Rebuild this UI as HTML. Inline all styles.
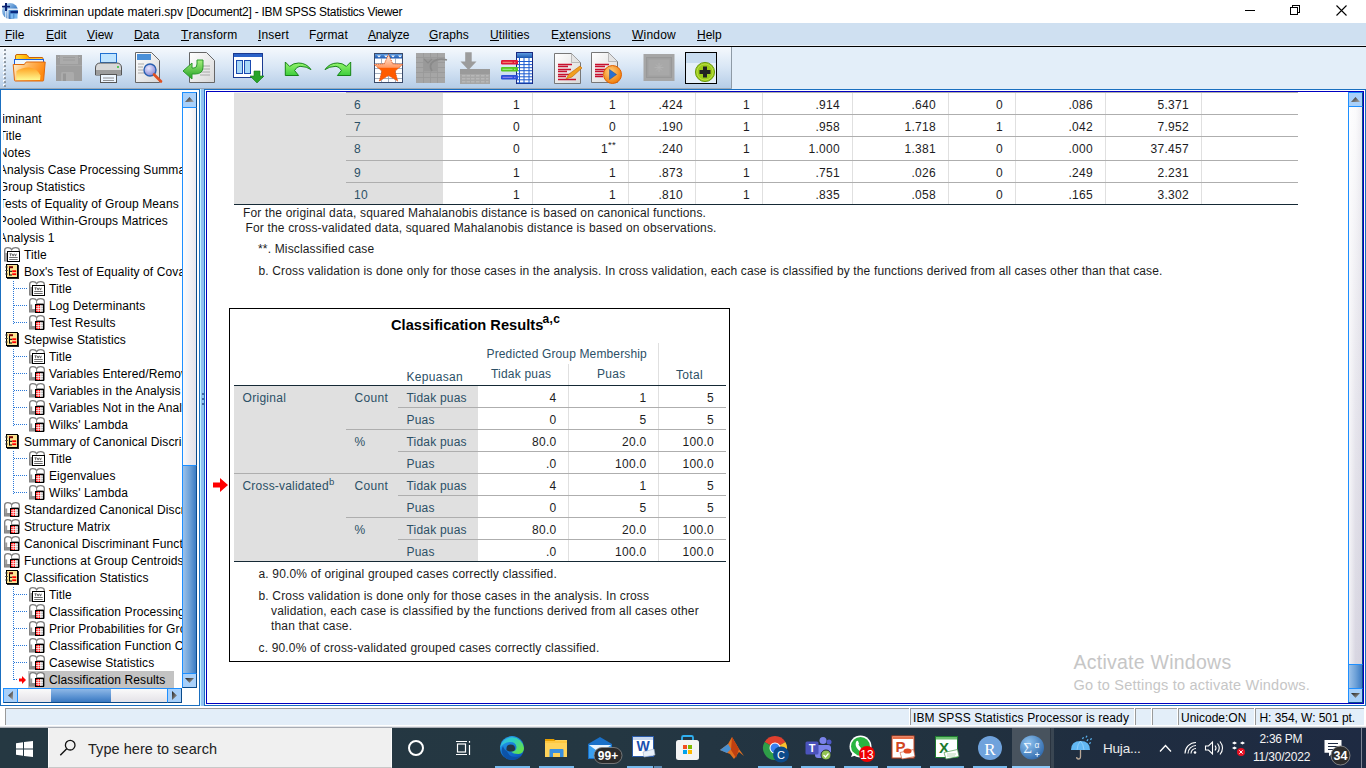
<!DOCTYPE html>
<html><head><meta charset="utf-8">
<style>
*{box-sizing:border-box}
html,body{margin:0;padding:0}
body{width:1366px;height:768px;overflow:hidden;position:relative;background:#fff;font-family:"Liberation Sans",sans-serif;font-size:12px;color:#000}
.a{position:absolute;white-space:nowrap;line-height:16px}
.b{position:absolute}
svg.b{overflow:visible}
u{text-decoration:none;position:relative}
u:after{content:"";position:absolute;left:0;right:0;bottom:0.6px;height:1px;background:#000}
sup{font-size:9.5px;line-height:0;vertical-align:0;position:relative;top:-5px}
</style></head><body>
<svg width="0" height="0" style="position:absolute">
<defs>
<linearGradient id="gtri" x1="0" y1="0" x2="1" y2="1"><stop offset="0" stop-color="#222"/><stop offset="1" stop-color="#aaa"/></linearGradient>
<symbol id="ic-title" viewBox="0 0 16 15">
  <path d="M0.7 13.8V3Q0.7 0.7 3.8 0.7Q6.8 0.7 7.6 2.6Q8.6 0.7 11.6 0.7Q15 0.7 15.3 3V13.8Z" fill="#fff" stroke="#7c7c7c" stroke-width="1.3"/>
  <path d="M1.2 6h2v7.5h-2z" fill="#9a9a9a"/>
  <rect x="3.5" y="4.5" width="12" height="10" fill="#fff" stroke="#000"/>
  <path d="M5.5 6.8h2.2M6.6 6.8v2.4M8.2 6.8l0.9 2.3l0.9-2.3M10.6 6.8l0.9 2.3l0.9-2.3M5.2 10.5h8.5M5.2 12.5h8.5" stroke="#4a4a4a" stroke-width="0.8" fill="none"/>
</symbol>
<symbol id="ic-table" viewBox="0 0 16 15">
  <path d="M0.7 13.8V3Q0.7 0.7 3.8 0.7Q6.8 0.7 7.6 2.6Q8.6 0.7 11.6 0.7Q15 0.7 15.3 3V13.8Z" fill="#fff" stroke="#7c7c7c" stroke-width="1.3"/>
  <path d="M1.2 6.5h2v7h-2z" fill="#9a9a9a"/>
  <path d="M1.2 11h5.5v3h-5.5z" fill="#8e8e8e"/>
  <path d="M7.6 2.6V13.8" stroke="#8a8a8a" stroke-width="1"/>
  <path d="M8 5h7v9h-7z" fill="#9c9c9c"/>
  <rect x="6.5" y="6.5" width="8" height="8" fill="#fff" stroke="#000"/>
  <rect x="7" y="7" width="4.5" height="7" fill="#f00"/>
  <rect x="11.5" y="7" width="2.5" height="7" fill="#a8a8a8"/>
  <path d="M7 8.75h7M7 10.5h7M7 12.25h7M9.2 7v7M11.8 7v7" stroke="#fff" stroke-width="0.75"/>
</symbol>
<symbol id="ic-book" viewBox="0 0 15 15">
  <rect x="2" y="1" width="12" height="14" fill="#2a2a2a"/>
  <rect x="1.5" y="0.5" width="11" height="13" fill="#fde493" stroke="#000"/>
  <path d="M0.2 3h2.6M0.2 6.5h2.6M0.2 10h2.6" stroke="#444" stroke-width="1.1"/>
  <rect x="4" y="2.2" width="4" height="2" fill="#7a0000"/>
  <path d="M4.5 4v7.5M4.5 7.3h2.5M4.5 11h2.5" stroke="#000" stroke-width="1"/>
  <rect x="7.2" y="6.3" width="4" height="1.8" fill="#f00"/>
  <rect x="7.2" y="9.3" width="4" height="1.8" fill="#f00"/>
</symbol>
</defs></svg>

<div class="b" style="left:0px;top:0px;width:1366px;height:23px;background:#fff"></div>
<svg class="b" style="left:0;top:0" width="20" height="22" viewBox="0 0 20 22">
<defs><linearGradient id="gic" x1="0" y1="0" x2="1" y2="1"><stop offset="0" stop-color="#cfe8fc"/><stop offset="0.55" stop-color="#4a88cc"/><stop offset="1" stop-color="#1a4a98"/></linearGradient></defs>
<circle cx="10" cy="11" r="8" fill="url(#gic)"/>
<rect x="5.3" y="11" width="1" height="7.5" fill="#fff"/>
<rect x="7.4" y="9.5" width="1" height="9.5" fill="#fff"/>
<rect x="8" y="8.6" width="10" height="1.2" fill="#fff"/>
<rect x="10.5" y="11" width="7.5" height="2.2" fill="#0a2a80"/>
<rect x="10.5" y="13.6" width="7" height="5" fill="#7ab8f0"/>
<path d="M13.8 13.6v5" stroke="#3a78c0" stroke-width="0.8"/>
<rect x="5" y="3" width="2" height="8" fill="#0a2070"/>
<rect x="2" y="5.8" width="8" height="1.6" fill="#0a2070"/>
</svg>
<div class="a" style="left:23.5px;top:3.84px;font-size:12px;line-height:16px;letter-spacing:0px">diskriminan update materi.spv</div>
<div class="a" style="left:186.5px;top:3.84px;font-size:12px;line-height:16px;letter-spacing:-0.27px">[Document2] - IBM SPSS Statistics Viewer</div>
<div class="b" style="left:1245px;top:10px;width:10px;height:1px;background:#000"></div>
<div class="b" style="left:1292px;top:5px;width:8px;height:8px;border:1px solid #000"></div>
<div class="b" style="left:1290px;top:7px;width:8px;height:8px;border:1px solid #000;background:#fff"></div>
<svg class="b" style="left:1336px;top:5px" width="11" height="11" viewBox="0 0 11 11"><path d="M0.5 0.5L10.5 10.5M10.5 0.5L0.5 10.5" stroke="#000" stroke-width="1.1"/></svg>
<div class="b" style="left:0px;top:23px;width:1366px;height:23px;background:#cfe0f1"></div>
<div class="a" style="left:5px;top:26.84px;font-size:12px;line-height:16px;letter-spacing:0px"><u>F</u>ile</div>
<div class="a" style="left:46px;top:26.84px;font-size:12px;line-height:16px;letter-spacing:0px"><u>E</u>dit</div>
<div class="a" style="left:87px;top:26.84px;font-size:12px;line-height:16px;letter-spacing:0px"><u>V</u>iew</div>
<div class="a" style="left:134px;top:26.84px;font-size:12px;line-height:16px;letter-spacing:0px"><u>D</u>ata</div>
<div class="a" style="left:181px;top:26.84px;font-size:12px;line-height:16px;letter-spacing:0.2px"><u>T</u>ransform</div>
<div class="a" style="left:258px;top:26.84px;font-size:12px;line-height:16px;letter-spacing:0.15px"><u>I</u>nsert</div>
<div class="a" style="left:309px;top:26.84px;font-size:12px;line-height:16px;letter-spacing:0.15px">F<u>o</u>rmat</div>
<div class="a" style="left:368px;top:26.84px;font-size:12px;line-height:16px;letter-spacing:-0.2px"><u>A</u>nalyze</div>
<div class="a" style="left:429px;top:26.84px;font-size:12px;line-height:16px;letter-spacing:0.1px"><u>G</u>raphs</div>
<div class="a" style="left:490px;top:26.84px;font-size:12px;line-height:16px;letter-spacing:0.1px"><u>U</u>tilities</div>
<div class="a" style="left:551px;top:26.84px;font-size:12px;line-height:16px;letter-spacing:0.12px">E<u>x</u>tensions</div>
<div class="a" style="left:632px;top:26.84px;font-size:12px;line-height:16px;letter-spacing:0.2px"><u>W</u>indow</div>
<div class="a" style="left:697px;top:26.84px;font-size:12px;line-height:16px;letter-spacing:0px"><u>H</u>elp</div>
<div class="b" style="left:0px;top:45px;width:1366px;height:1px;background:#e8f0f8"></div>
<div class="b" style="left:0px;top:46px;width:1366px;height:1px;background:#000"></div>
<div class="b" style="left:0px;top:47px;width:1366px;height:42px;background:#e3eef9"></div>
<div class="b" style="left:0px;top:47px;width:732px;height:41px;background:linear-gradient(#f5f9fd 0%,#d8e6f5 50%,#b6cde7 100%);border-right:1px solid #8e9aa6"></div>
<div class="b" style="left:0px;top:88px;width:732px;height:1px;background:#9aa8b6"></div>
<div class="b" style="left:3px;top:48px;width:2px;height:2px;background:rgba(255,255,255,0.9)"></div>
<div class="b" style="left:4px;top:48.5px;width:2px;height:2px;background:#8a949e;border-radius:0.5px"></div>
<div class="b" style="left:3px;top:52px;width:2px;height:2px;background:rgba(255,255,255,0.9)"></div>
<div class="b" style="left:4px;top:52.5px;width:2px;height:2px;background:#8a949e;border-radius:0.5px"></div>
<div class="b" style="left:3px;top:56px;width:2px;height:2px;background:rgba(255,255,255,0.9)"></div>
<div class="b" style="left:4px;top:56.5px;width:2px;height:2px;background:#8a949e;border-radius:0.5px"></div>
<div class="b" style="left:3px;top:60px;width:2px;height:2px;background:rgba(255,255,255,0.9)"></div>
<div class="b" style="left:4px;top:60.5px;width:2px;height:2px;background:#8a949e;border-radius:0.5px"></div>
<div class="b" style="left:3px;top:64px;width:2px;height:2px;background:rgba(255,255,255,0.9)"></div>
<div class="b" style="left:4px;top:64.5px;width:2px;height:2px;background:#8a949e;border-radius:0.5px"></div>
<div class="b" style="left:3px;top:68px;width:2px;height:2px;background:rgba(255,255,255,0.9)"></div>
<div class="b" style="left:4px;top:68.5px;width:2px;height:2px;background:#8a949e;border-radius:0.5px"></div>
<div class="b" style="left:3px;top:72px;width:2px;height:2px;background:rgba(255,255,255,0.9)"></div>
<div class="b" style="left:4px;top:72.5px;width:2px;height:2px;background:#8a949e;border-radius:0.5px"></div>
<div class="b" style="left:3px;top:76px;width:2px;height:2px;background:rgba(255,255,255,0.9)"></div>
<div class="b" style="left:4px;top:76.5px;width:2px;height:2px;background:#8a949e;border-radius:0.5px"></div>
<div class="b" style="left:3px;top:80px;width:2px;height:2px;background:rgba(255,255,255,0.9)"></div>
<div class="b" style="left:4px;top:80.5px;width:2px;height:2px;background:#8a949e;border-radius:0.5px"></div>
<div class="b" style="left:3px;top:84px;width:2px;height:2px;background:rgba(255,255,255,0.9)"></div>
<div class="b" style="left:4px;top:84.5px;width:2px;height:2px;background:#8a949e;border-radius:0.5px"></div>
<svg class="b" style="left:0;top:47px" width="732" height="41" viewBox="0 47 732 41">
<defs>
<linearGradient id="gfold" x1="0" y1="0" x2="0" y2="1"><stop offset="0" stop-color="#ffe070"/><stop offset="0.5" stop-color="#ffb030"/><stop offset="1" stop-color="#ffd860"/></linearGradient>
<linearGradient id="ggreen" x1="0" y1="0" x2="0" y2="1"><stop offset="0" stop-color="#a8f080"/><stop offset="1" stop-color="#20a020"/></linearGradient>
<linearGradient id="gdoc" x1="0" y1="0" x2="1" y2="1"><stop offset="0" stop-color="#fff"/><stop offset="1" stop-color="#d8d8d8"/></linearGradient>
<linearGradient id="gblue" x1="0" y1="0" x2="0" y2="1"><stop offset="0" stop-color="#5d9be0"/><stop offset="1" stop-color="#1a56b0"/></linearGradient>
<linearGradient id="ggreen2" x1="0" y1="0" x2="0" y2="1"><stop offset="0" stop-color="#9af870"/><stop offset="1" stop-color="#3ccc3c"/></linearGradient>
<linearGradient id="gtab" x1="0" y1="0" x2="1" y2="0"><stop offset="0" stop-color="#ffe040"/><stop offset="0.4" stop-color="#ffb000"/><stop offset="1" stop-color="#ffd040"/></linearGradient>
<linearGradient id="gfold2" x1="0" y1="0" x2="1" y2="0.3"><stop offset="0" stop-color="#fff4d8"/><stop offset="0.5" stop-color="#ffb860"/><stop offset="1" stop-color="#ff8a10"/></linearGradient>
<linearGradient id="gfoldlo" x1="0" y1="0" x2="0" y2="1"><stop offset="0" stop-color="#ffa020"/><stop offset="1" stop-color="#fff890"/></linearGradient>
<linearGradient id="gstar" x1="0" y1="0" x2="0" y2="1"><stop offset="0" stop-color="#fff0e4"/><stop offset="0.48" stop-color="#ff9a66"/><stop offset="0.52" stop-color="#ff5c00"/><stop offset="1" stop-color="#ff5a00"/></linearGradient>
<radialGradient id="gorange" cx="0.4" cy="0.35" r="0.7"><stop offset="0" stop-color="#ffd080"/><stop offset="1" stop-color="#f07800"/></radialGradient>
<radialGradient id="gmag" cx="0.4" cy="0.35" r="0.7"><stop offset="0" stop-color="#e8e8ff"/><stop offset="1" stop-color="#8080d0"/></radialGradient>
</defs>
<!-- 1 open folder -->
<path d="M15.5 59V56q0-1.5 1.5-1.5h9q1 0 1.8 1.2l1 1.8h13.2q1 0 1 1V60H15.5z" fill="url(#gtab)" stroke="#c8600a"/>
<rect x="14.5" y="59.5" width="29" height="5" fill="#eef8ff" stroke="#1a60e0"/>
<path d="M13.2 64.5h11l2-2.5h19l-1.6 18.3q0 0.7-0.7 0.7h-27.6q-0.7 0-0.8-0.7z" fill="url(#gfold2)" stroke="#e0680a"/>
<path d="M16.5 80q-0.5-6 0-9q6-4 13-3.5q8 1 11 8l-0.5 4.5z" fill="url(#gfoldlo)"/>
<!-- 2 floppy (disabled) -->
<rect x="56" y="55" width="26" height="26" fill="#9e9e9e"/>
<rect x="60" y="55" width="18" height="9" fill="#ababab"/>
<path d="M63 57.5h12M63 60h12" stroke="#999" stroke-width="0.8"/>
<path d="M56 65.5h26" stroke="#aaa" stroke-width="0.8"/>
<path d="M61 81v-7.5q0-1.5 1.5-1.5h10q1.5 0 1.5 1.5V81z" fill="#ababab"/>
<rect x="63" y="73.5" width="3" height="7.5" fill="#979797"/>
<circle cx="58.5" cy="57.5" r="0.6" fill="#bbb"/><circle cx="79.5" cy="57.5" r="0.6" fill="#bbb"/>
<!-- 3 printer -->
<rect x="100.5" y="53.5" width="16" height="9" fill="#bfe4ff" stroke="#2070d0"/>
<path d="M95.5 68q0-5 5-5h16q5 0 5 5v7h-26z" fill="#d8d8d8" stroke="#555"/>
<rect x="96" y="70" width="25" height="5" fill="#9c9c9c"/>
<circle cx="118" cy="67" r="1" fill="#30c030"/>
<rect x="100.5" y="74.5" width="16" height="8" fill="#eef6ff" stroke="#555"/>
<path d="M103 78h11M103 80.5h11" stroke="#777" stroke-width="0.8"/>
<!-- 4 print preview -->
<path d="M135.5 52.5h16l8 8v22h-24z" fill="url(#gdoc)" stroke="#666"/>
<rect x="137" y="54" width="14" height="6" fill="#4a90d8"/>
<path d="M138 64h6M138 67h5M138 70h5M138 73h6" stroke="#999" stroke-width="0.8"/>
<circle cx="150" cy="70" r="6" fill="url(#gmag)" stroke="#2a60b0" stroke-width="1.4"/>
<path d="M154 74.5l7 7" stroke="#e05020" stroke-width="2.6" stroke-linecap="round"/>
<!-- 5 export doc w green arrow -->
<path d="M189.5 52.5h17l8 8v22h-25z" fill="url(#gdoc)" stroke="#666"/>
<path d="M200 66h10M200 69h10M200 72h10M200 75h10" stroke="#999" stroke-width="0.8"/>
<path d="M203 60v7q0 7-8 7h-3v5l-9-8l9-8v5h2q3 0 3-4v-4z" fill="url(#ggreen)" stroke="#2a9a2a"/>
<!-- 6 window w green arrow -->
<rect x="233.5" y="53.5" width="29" height="24" fill="#fff" stroke="#1a3a90"/>
<rect x="234" y="54" width="28" height="3" fill="#2a62c8"/>
<rect x="236.5" y="60.5" width="6" height="13" fill="#a8d8f8" stroke="#1a4ab0"/>
<rect x="244.5" y="60.5" width="6" height="13" fill="#a8d8f8" stroke="#1a4ab0"/>
<path d="M254 71h6v5h4l-7 7l-7-7h4z" fill="#28a428" stroke="#1a7a1a" stroke-width="0.6"/>
<!-- 7 undo -->
<path d="M285.3 62 L289.6 66.4 Q293.5 63 298.5 63 Q306.5 63 311 69.6 Q307 66.5 300 66.3 Q296.5 66.6 294.6 70.5 L298.6 75.5 L285.3 75.5 Z" fill="url(#ggreen2)" stroke="#0a7a0a" stroke-width="0.9" stroke-linejoin="round"/>
<!-- 8 redo -->
<path d="M 350.7 62 L 346.4 66.4 Q 342.5 63 337.5 63 Q 329.5 63 325 69.6 Q 329 66.5 336 66.3 Q 339.5 66.6 341.4 70.5 L 337.4 75.5 L 350.7 75.5 Z" fill="url(#ggreen2)" stroke="#0a7a0a" stroke-width="0.9" stroke-linejoin="round"/>
<!-- 9 grid with star -->
<rect x="374.5" y="53.5" width="28" height="29" fill="#fff" stroke="#3a4a6a"/>
<rect x="375" y="54" width="27" height="4.5" fill="url(#gblue)"/>
<path d="M377 55.5l2 2l2-2M384 55.5l2 2l2-2M391 55.5l2 2l2-2M398 55.5l2 2l2-2" fill="#fff"/>
<path d="M375 63.5h27M375 68.5h27M375 73.5h27M375 78.5h27M381.5 58v24M388.5 58v24M395.5 58v24" stroke="#8c9ab0" stroke-width="0.8"/>
<path d="M388.5 54.5l4.2 9.3l10 0.7l-7.6 6.6l2.6 10l-9.2-5.6l-9.2 5.6l2.6-10l-7.6-6.6l10-0.7z" fill="url(#gstar)" stroke="#e05010" stroke-width="0.9" stroke-dasharray="1.2 0.8"/>
<!-- 10 gray grid (disabled) -->
<rect x="416" y="53" width="29" height="30" fill="#a6a6a6"/>
<path d="M416 57.5h29M416 62.5h29M416 67.5h29M416 72.5h29M416 77.5h29M423.5 53v30M430.5 53v30M437.5 53v30" stroke="#989898" stroke-width="0.8"/>
<rect x="423.5" y="58.5" width="14" height="13" fill="#999"/>
<path d="M424 59l4 4l4-4" fill="none" stroke="#8a8a8a" stroke-width="1.2"/>
<path d="M432 71q-4-6 2-10q5-3 13-1" fill="none" stroke="#8a8a8a" stroke-width="1.8"/>
<!-- 11 gray download -->
<path d="M465.2 52.2h6.5v9.3h4.8l-8 8.5l-8-8.5h4.7z" fill="#9c9c9c"/>
<rect x="460" y="69" width="30" height="15" fill="#a6a6a6"/>
<rect x="460" y="69" width="30" height="5" fill="#9a9a9a"/>
<path d="M462 75.8h3.5M466.5 75.8h3.5M471 75.8h3.5M476 75.8h3.5M481 75.8h3.5M486 75.8h2.5M462 78.8h3.5M466.5 78.8h3.5M471 78.8h3.5M476 78.8h3.5M481 78.8h3.5M486 78.8h2.5M462 81.8h3.5M466.5 81.8h3.5M471 81.8h3.5M476 81.8h3.5M481 81.8h3.5M486 81.8h2.5" stroke="#b8b8b8" stroke-width="1.6"/>
<!-- 12 blue grid w bars -->
<rect x="516.5" y="52.5" width="16" height="31" fill="#fff" stroke="#1a2a80"/>
<rect x="517" y="53" width="15" height="5" fill="url(#gblue)"/>
<path d="M517 61.5h15M517 64.6h15M517 67.7h15M517 70.7h15M517 73.8h15M517 76.8h15M517 79.8h15M517 82.9h15M519.5 58v25M524 58v25M529 58v25" stroke="#1a5ad0" stroke-width="1"/>
<rect x="501" y="60" width="17" height="4.5" rx="1.2" fill="#e01838"/>
<path d="M502.5 62.3h10M514 62.3h1.5" stroke="#f8a080" stroke-width="0.9"/>
<rect x="501" y="67" width="17" height="4.5" rx="1.2" fill="#58c820"/>
<path d="M502.5 69.3h10M514 69.3h1.5" stroke="#a8f0a0" stroke-width="0.9"/>
<rect x="501" y="75" width="17" height="4.5" rx="1.2" fill="#2a50d8"/>
<path d="M502.5 77.3h10M514 77.3h1.5" stroke="#a890f0" stroke-width="0.9"/>
<!-- 13 doc w pencil -->
<path d="M554.5 53.5h17l9 9v21h-26z" fill="url(#gdoc)" stroke="#777"/>
<path d="M571.5 53.5v9h9z" fill="#e4e4e4" stroke="#999" stroke-width="0.6"/>
<path d="M558 64.5h14M558 66.5h10M558 69.5h13M558 71.5h9M558 74.5h12M558 76.5h8M558 79.5h18" stroke="#c8102e" stroke-width="1.3"/>
<path d="M566 79l3-5l11-8l2 2l-10 9z" fill="#f0a020" stroke="#c06000" stroke-width="0.6"/>
<!-- 14 doc w play -->
<path d="M591.5 52.5h17l9 9v21h-26z" fill="url(#gdoc)" stroke="#777"/>
<path d="M608.5 52.5v9h9z" fill="#e4e4e4" stroke="#999" stroke-width="0.6"/>
<path d="M595 64.5h14M595 66.5h10M595 69.5h13M595 71.5h9M595 74.5h8M595 76.5h8" stroke="#c8102e" stroke-width="1.3"/>
<circle cx="612.5" cy="74.5" r="9" fill="url(#gorange)" stroke="#e06000"/>
<path d="M609.5 69.5v10l7-5z" fill="#2a70d0" stroke="#1a4a90" stroke-width="0.5"/>
<!-- 15 gray screen -->
<rect x="643.5" y="54" width="31" height="27" fill="#a6a6a6"/>
<rect x="646.5" y="57.5" width="25" height="20" fill="#a0a0a0" stroke="#989898"/>
<rect x="648.5" y="59.5" width="21" height="16" fill="#a8a8a8"/>
<path d="M659 63v9M654.5 67.5h9M656 64.5l6 6M662 64.5l-6 6" stroke="#b4b4b4" stroke-width="0.8"/>
<!-- 16 add button -->
<rect x="685.5" y="52.5" width="31" height="31" fill="#e6f0fa" stroke="#000"/>
<rect x="686" y="53" width="30" height="10" fill="#c8dcf0"/>
<circle cx="705" cy="72" r="9.6" fill="#9ccc1a" stroke="#6a9a10"/>
<circle cx="705" cy="72" r="8" fill="none" stroke="#c0e050" stroke-width="0.8"/>
<path d="M703 66.5h4v11h-4zM699.5 70h11v4h-11z" fill="#222"/>
</svg>
<div class="b" style="left:0px;top:89px;width:1366px;height:617px;background:#e3eef9"></div>
<div class="b" style="left:0px;top:89px;width:200px;height:617px;background:#fff;border:1px solid #1a6fc0"></div>
<div class="b" style="left:3px;top:90px;width:179px;height:598px;overflow:hidden"><div class="b" style="left:-3px;top:-90px;width:1366px;height:768px">
<div class="b" style="left:28px;top:671px;width:146px;height:17px;background:#c3c3c3"></div>
<div class="b" style="left:14px;top:288px;width:14px;height:1px;background:repeating-linear-gradient(90deg,#2a78d8 0 1px,transparent 1px 2px)"></div>
<div class="b" style="left:14px;top:305px;width:14px;height:1px;background:repeating-linear-gradient(90deg,#2a78d8 0 1px,transparent 1px 2px)"></div>
<div class="b" style="left:14px;top:322px;width:14px;height:1px;background:repeating-linear-gradient(90deg,#2a78d8 0 1px,transparent 1px 2px)"></div>
<div class="b" style="left:14px;top:356px;width:14px;height:1px;background:repeating-linear-gradient(90deg,#2a78d8 0 1px,transparent 1px 2px)"></div>
<div class="b" style="left:14px;top:373px;width:14px;height:1px;background:repeating-linear-gradient(90deg,#2a78d8 0 1px,transparent 1px 2px)"></div>
<div class="b" style="left:14px;top:390px;width:14px;height:1px;background:repeating-linear-gradient(90deg,#2a78d8 0 1px,transparent 1px 2px)"></div>
<div class="b" style="left:14px;top:407px;width:14px;height:1px;background:repeating-linear-gradient(90deg,#2a78d8 0 1px,transparent 1px 2px)"></div>
<div class="b" style="left:14px;top:424px;width:14px;height:1px;background:repeating-linear-gradient(90deg,#2a78d8 0 1px,transparent 1px 2px)"></div>
<div class="b" style="left:14px;top:458px;width:14px;height:1px;background:repeating-linear-gradient(90deg,#2a78d8 0 1px,transparent 1px 2px)"></div>
<div class="b" style="left:14px;top:475px;width:14px;height:1px;background:repeating-linear-gradient(90deg,#2a78d8 0 1px,transparent 1px 2px)"></div>
<div class="b" style="left:14px;top:492px;width:14px;height:1px;background:repeating-linear-gradient(90deg,#2a78d8 0 1px,transparent 1px 2px)"></div>
<div class="b" style="left:14px;top:594px;width:14px;height:1px;background:repeating-linear-gradient(90deg,#2a78d8 0 1px,transparent 1px 2px)"></div>
<div class="b" style="left:14px;top:611px;width:14px;height:1px;background:repeating-linear-gradient(90deg,#2a78d8 0 1px,transparent 1px 2px)"></div>
<div class="b" style="left:14px;top:628px;width:14px;height:1px;background:repeating-linear-gradient(90deg,#2a78d8 0 1px,transparent 1px 2px)"></div>
<div class="b" style="left:14px;top:645px;width:14px;height:1px;background:repeating-linear-gradient(90deg,#2a78d8 0 1px,transparent 1px 2px)"></div>
<div class="b" style="left:14px;top:662px;width:14px;height:1px;background:repeating-linear-gradient(90deg,#2a78d8 0 1px,transparent 1px 2px)"></div>
<div class="b" style="left:14px;top:679px;width:14px;height:1px;background:repeating-linear-gradient(90deg,#2a78d8 0 1px,transparent 1px 2px)"></div>
<div class="b" style="left:13px;top:281px;width:1px;height:43px;background:repeating-linear-gradient(#2a78d8 0 1px,transparent 1px 2px)"></div>
<div class="b" style="left:13px;top:349px;width:1px;height:77px;background:repeating-linear-gradient(#2a78d8 0 1px,transparent 1px 2px)"></div>
<div class="b" style="left:13px;top:451px;width:1px;height:43px;background:repeating-linear-gradient(#2a78d8 0 1px,transparent 1px 2px)"></div>
<div class="b" style="left:13px;top:587px;width:1px;height:94px;background:repeating-linear-gradient(#2a78d8 0 1px,transparent 1px 2px)"></div>
<svg class="b" style="left:-44.5px;top:111px" width="15" height="15"><use href="#ic-book"/></svg>
<div class="a" style="left:-25.5px;top:110.84px;font-size:12px;line-height:16px;letter-spacing:0.1px">Discriminant</div>
<svg class="b" style="left:-21.2px;top:128px" width="16" height="15"><use href="#ic-title"/></svg>
<div class="a" style="left:-1.2px;top:127.84px;font-size:12px;line-height:16px;letter-spacing:0.1px">Title</div>
<svg class="b" style="left:-21.2px;top:145px" width="16" height="15"><use href="#ic-title"/></svg>
<div class="a" style="left:-1.2px;top:144.84px;font-size:12px;line-height:16px;letter-spacing:0.1px">Notes</div>
<svg class="b" style="left:-21.2px;top:162px" width="16" height="15"><use href="#ic-table"/></svg>
<div class="a" style="left:-1.2px;top:161.84px;font-size:12px;line-height:16px;letter-spacing:0.1px">Analysis Case Processing Summary</div>
<svg class="b" style="left:-21.2px;top:179px" width="16" height="15"><use href="#ic-table"/></svg>
<div class="a" style="left:-1.2px;top:178.84px;font-size:12px;line-height:16px;letter-spacing:0.1px">Group Statistics</div>
<svg class="b" style="left:-21.2px;top:196px" width="16" height="15"><use href="#ic-table"/></svg>
<div class="a" style="left:-1.2px;top:195.84px;font-size:12px;line-height:16px;letter-spacing:0.1px">Tests of Equality of Group Means</div>
<svg class="b" style="left:-21.2px;top:213px" width="16" height="15"><use href="#ic-table"/></svg>
<div class="a" style="left:-1.2px;top:212.84px;font-size:12px;line-height:16px;letter-spacing:0.1px">Pooled Within-Groups Matrices</div>
<svg class="b" style="left:-20.2px;top:230px" width="15" height="15"><use href="#ic-book"/></svg>
<div class="a" style="left:-1.2px;top:229.84px;font-size:12px;line-height:16px;letter-spacing:0.1px">Analysis 1</div>
<svg class="b" style="left:4px;top:247px" width="16" height="15"><use href="#ic-title"/></svg>
<div class="a" style="left:24px;top:246.84px;font-size:12px;line-height:16px;letter-spacing:0.1px">Title</div>
<svg class="b" style="left:5px;top:264px" width="15" height="15"><use href="#ic-book"/></svg>
<div class="a" style="left:24px;top:263.84px;font-size:12px;line-height:16px;letter-spacing:0.1px">Box&#x27;s Test of Equality of Covariance Matrices</div>
<svg class="b" style="left:29px;top:281px" width="16" height="15"><use href="#ic-title"/></svg>
<div class="a" style="left:49px;top:280.84px;font-size:12px;line-height:16px;letter-spacing:0.1px">Title</div>
<svg class="b" style="left:29px;top:298px" width="16" height="15"><use href="#ic-table"/></svg>
<div class="a" style="left:49px;top:297.84px;font-size:12px;line-height:16px;letter-spacing:0.1px">Log Determinants</div>
<svg class="b" style="left:29px;top:315px" width="16" height="15"><use href="#ic-table"/></svg>
<div class="a" style="left:49px;top:314.84px;font-size:12px;line-height:16px;letter-spacing:0.1px">Test Results</div>
<svg class="b" style="left:5px;top:332px" width="15" height="15"><use href="#ic-book"/></svg>
<div class="a" style="left:24px;top:331.84px;font-size:12px;line-height:16px;letter-spacing:0.1px">Stepwise Statistics</div>
<svg class="b" style="left:29px;top:349px" width="16" height="15"><use href="#ic-title"/></svg>
<div class="a" style="left:49px;top:348.84px;font-size:12px;line-height:16px;letter-spacing:0.1px">Title</div>
<svg class="b" style="left:29px;top:366px" width="16" height="15"><use href="#ic-table"/></svg>
<div class="a" style="left:49px;top:365.84px;font-size:12px;line-height:16px;letter-spacing:0.1px">Variables Entered/Removed</div>
<svg class="b" style="left:29px;top:383px" width="16" height="15"><use href="#ic-table"/></svg>
<div class="a" style="left:49px;top:382.84px;font-size:12px;line-height:16px;letter-spacing:0.1px">Variables in the Analysis</div>
<svg class="b" style="left:29px;top:400px" width="16" height="15"><use href="#ic-table"/></svg>
<div class="a" style="left:49px;top:399.84px;font-size:12px;line-height:16px;letter-spacing:0.1px">Variables Not in the Analysis</div>
<svg class="b" style="left:29px;top:417px" width="16" height="15"><use href="#ic-table"/></svg>
<div class="a" style="left:49px;top:416.84px;font-size:12px;line-height:16px;letter-spacing:0.1px">Wilks&#x27; Lambda</div>
<svg class="b" style="left:5px;top:434px" width="15" height="15"><use href="#ic-book"/></svg>
<div class="a" style="left:24px;top:433.84px;font-size:12px;line-height:16px;letter-spacing:0.1px">Summary of Canonical Discriminant Functions</div>
<svg class="b" style="left:29px;top:451px" width="16" height="15"><use href="#ic-title"/></svg>
<div class="a" style="left:49px;top:450.84px;font-size:12px;line-height:16px;letter-spacing:0.1px">Title</div>
<svg class="b" style="left:29px;top:468px" width="16" height="15"><use href="#ic-table"/></svg>
<div class="a" style="left:49px;top:467.84px;font-size:12px;line-height:16px;letter-spacing:0.1px">Eigenvalues</div>
<svg class="b" style="left:29px;top:485px" width="16" height="15"><use href="#ic-table"/></svg>
<div class="a" style="left:49px;top:484.84px;font-size:12px;line-height:16px;letter-spacing:0.1px">Wilks&#x27; Lambda</div>
<svg class="b" style="left:4px;top:502px" width="16" height="15"><use href="#ic-table"/></svg>
<div class="a" style="left:24px;top:501.84px;font-size:12px;line-height:16px;letter-spacing:0.1px">Standardized Canonical Discriminant Function Coefficients</div>
<svg class="b" style="left:4px;top:519px" width="16" height="15"><use href="#ic-table"/></svg>
<div class="a" style="left:24px;top:518.84px;font-size:12px;line-height:16px;letter-spacing:0.1px">Structure Matrix</div>
<svg class="b" style="left:4px;top:536px" width="16" height="15"><use href="#ic-table"/></svg>
<div class="a" style="left:24px;top:535.84px;font-size:12px;line-height:16px;letter-spacing:0.1px">Canonical Discriminant Function Coefficients</div>
<svg class="b" style="left:4px;top:553px" width="16" height="15"><use href="#ic-table"/></svg>
<div class="a" style="left:24px;top:552.84px;font-size:12px;line-height:16px;letter-spacing:0.1px">Functions at Group Centroids</div>
<svg class="b" style="left:5px;top:570px" width="15" height="15"><use href="#ic-book"/></svg>
<div class="a" style="left:24px;top:569.84px;font-size:12px;line-height:16px;letter-spacing:0.1px">Classification Statistics</div>
<svg class="b" style="left:29px;top:587px" width="16" height="15"><use href="#ic-title"/></svg>
<div class="a" style="left:49px;top:586.84px;font-size:12px;line-height:16px;letter-spacing:0.1px">Title</div>
<svg class="b" style="left:29px;top:604px" width="16" height="15"><use href="#ic-table"/></svg>
<div class="a" style="left:49px;top:603.84px;font-size:12px;line-height:16px;letter-spacing:0.1px">Classification Processing Summary</div>
<svg class="b" style="left:29px;top:621px" width="16" height="15"><use href="#ic-table"/></svg>
<div class="a" style="left:49px;top:620.84px;font-size:12px;line-height:16px;letter-spacing:0.1px">Prior Probabilities for Groups</div>
<svg class="b" style="left:29px;top:638px" width="16" height="15"><use href="#ic-table"/></svg>
<div class="a" style="left:49px;top:637.84px;font-size:12px;line-height:16px;letter-spacing:0.1px">Classification Function Coefficients</div>
<svg class="b" style="left:29px;top:655px" width="16" height="15"><use href="#ic-table"/></svg>
<div class="a" style="left:49px;top:654.84px;font-size:12px;line-height:16px;letter-spacing:0.1px">Casewise Statistics</div>
<svg class="b" style="left:29px;top:672px" width="16" height="15"><use href="#ic-table"/></svg>
<div class="a" style="left:49px;top:671.84px;font-size:12px;line-height:16px;letter-spacing:0.1px">Classification Results</div>
<div class="b" style="left:17px;top:677px;width:10px;height:5px;background:#fff"></div>
<svg class="b" style="left:19px;top:676px" width="7" height="8" viewBox="0 0 7 8"><path d="M0 2.5h3V0l4 4l-4 4V5.5H0z" fill="#f00"/></svg>
</div></div>
<div class="b" style="left:182px;top:92px;width:15px;height:596px;background:linear-gradient(90deg,rgba(255,255,255,0.7),rgba(255,255,255,0) 50%,rgba(200,196,210,0.25)),linear-gradient(#fcfcfd,#f0eff4 40%,#e2e1e8 100%);border-left:1px solid #1e8fff;border-right:1px solid #0a4a8a"></div>
<div class="b" style="left:182px;top:92px;width:15px;height:16px;background:#a8d0fa;border:1px solid #1e8fff;border-right-color:#0a4a8a;border-bottom-color:#1e8fff"></div>
<svg class="b" style="left:185px;top:97px" width="9" height="5" viewBox="0 0 9 5"><path d="M0 5L4.5 0L9 5z" fill="url(#gtri)"/></svg>
<div class="b" style="left:182px;top:465px;width:15px;height:208px;background:linear-gradient(90deg,#9cc2ea,#6fa2d8 50%,#3c7cc4);border-left:1px solid #1e8fff;border-right:1px solid #0a4a8a;border-top:1px solid #1e8fff"></div>
<div class="b" style="left:182px;top:673px;width:15px;height:15px;background:#a8d0fa;border:1px solid #1e8fff;border-right-color:#0a4a8a;border-bottom-color:#0a4a8a"></div>
<svg class="b" style="left:185px;top:678px" width="9" height="5" viewBox="0 0 9 5"><path d="M0 0L4.5 5L9 0z" fill="url(#gtri)"/></svg>
<div class="b" style="left:3px;top:688px;width:179px;height:15px;background:linear-gradient(#fafafa,#e4e2e8);border-top:1px solid #1e8fff;border-bottom:1px solid #0a4a8a"></div>
<div class="b" style="left:3px;top:688px;width:15px;height:15px;background:#a8d0fa;border:1px solid #1e8fff;border-bottom-color:#0a4a8a"></div>
<svg class="b" style="left:8px;top:691px" width="5" height="9" viewBox="0 0 5 9"><path d="M5 0L0 4.5L5 9z" fill="url(#gtri)"/></svg>
<div class="b" style="left:51px;top:688px;width:60px;height:15px;background:linear-gradient(#8fb8e6,#5a92d2 60%,#3a78c0);border-top:1px solid #1e8fff;border-bottom:1px solid #0a4a8a"></div>
<div class="b" style="left:167px;top:688px;width:15px;height:15px;background:#a8d0fa;border:1px solid #1e8fff;border-right-color:#0a4a8a;border-bottom-color:#0a4a8a"></div>
<svg class="b" style="left:172px;top:691px" width="5" height="9" viewBox="0 0 5 9"><path d="M0 0L5 4.5L0 9z" fill="url(#gtri)"/></svg>
<div class="b" style="left:200px;top:89px;width:1px;height:617px;background:#c4f6ff"></div>
<div class="b" style="left:201px;top:89px;width:3px;height:617px;background:#92c2f2"></div>
<div class="b" style="left:202px;top:393px;width:2px;height:2px;background:#2a4a8a;border-radius:1px"></div>
<div class="b" style="left:202px;top:398px;width:2px;height:2px;background:#2a4a8a;border-radius:1px"></div>
<div class="b" style="left:202px;top:403px;width:2px;height:2px;background:#2a4a8a;border-radius:1px"></div>
<div class="b" style="left:204px;top:89px;width:1162px;height:617px;background:#fff;border:1px solid #1a6fc0"></div>
<div class="b" style="left:206px;top:91px;width:1158px;height:613px;border:1px solid #0000c0"></div>
<div class="b" style="left:207px;top:92px;width:1141px;height:611px;overflow:hidden"><div class="b" style="left:-207px;top:-92px;width:1366px;height:768px">
<div class="b" style="left:234px;top:92px;width:209px;height:112px;background:#e0e0e0"></div>
<div class="b" style="left:532px;top:92px;width:1px;height:112px;background:#e0e0e0"></div>
<div class="b" style="left:628px;top:92px;width:1px;height:112px;background:#e0e0e0"></div>
<div class="b" style="left:695px;top:92px;width:1px;height:112px;background:#e0e0e0"></div>
<div class="b" style="left:762px;top:92px;width:1px;height:112px;background:#e0e0e0"></div>
<div class="b" style="left:852px;top:92px;width:1px;height:112px;background:#e0e0e0"></div>
<div class="b" style="left:948px;top:92px;width:1px;height:112px;background:#e0e0e0"></div>
<div class="b" style="left:1015px;top:92px;width:1px;height:112px;background:#e0e0e0"></div>
<div class="b" style="left:1105px;top:92px;width:1px;height:112px;background:#e0e0e0"></div>
<div class="b" style="left:1201px;top:92px;width:1px;height:112px;background:#e0e0e0"></div>
<div class="b" style="left:234px;top:92px;width:112px;height:1px;background:#f0f2f0"></div>
<div class="b" style="left:346px;top:92px;width:952px;height:1px;background:#aeaeae"></div>
<div class="b" style="left:346px;top:114px;width:952px;height:1px;background:#aeaeae"></div>
<div class="b" style="left:346px;top:136px;width:952px;height:1px;background:#aeaeae"></div>
<div class="b" style="left:346px;top:160px;width:952px;height:1px;background:#aeaeae"></div>
<div class="b" style="left:346px;top:182px;width:952px;height:1px;background:#aeaeae"></div>
<div class="b" style="left:234px;top:204px;width:1064px;height:1px;background:#152935"></div>
<div class="a" style="left:354px;top:96.84px;font-size:12px;line-height:16px;color:#2c5066;letter-spacing:0.3px">6</div>
<div class="a" style="right:846px;top:96.84px;font-size:12px;line-height:16px;color:#1c1c1e;letter-spacing:0.3px">1</div>
<div class="a" style="right:750px;top:96.84px;font-size:12px;line-height:16px;color:#1c1c1e;letter-spacing:0.3px">1</div>
<div class="a" style="right:683px;top:96.84px;font-size:12px;line-height:16px;color:#1c1c1e;letter-spacing:0.3px">.424</div>
<div class="a" style="right:616px;top:96.84px;font-size:12px;line-height:16px;color:#1c1c1e;letter-spacing:0.3px">1</div>
<div class="a" style="right:526px;top:96.84px;font-size:12px;line-height:16px;color:#1c1c1e;letter-spacing:0.3px">.914</div>
<div class="a" style="right:430px;top:96.84px;font-size:12px;line-height:16px;color:#1c1c1e;letter-spacing:0.3px">.640</div>
<div class="a" style="right:363px;top:96.84px;font-size:12px;line-height:16px;color:#1c1c1e;letter-spacing:0.3px">0</div>
<div class="a" style="right:273px;top:96.84px;font-size:12px;line-height:16px;color:#1c1c1e;letter-spacing:0.3px">.086</div>
<div class="a" style="right:177px;top:96.84px;font-size:12px;line-height:16px;color:#1c1c1e;letter-spacing:0.3px">5.371</div>
<div class="a" style="left:354px;top:118.84px;font-size:12px;line-height:16px;color:#2c5066;letter-spacing:0.3px">7</div>
<div class="a" style="right:846px;top:118.84px;font-size:12px;line-height:16px;color:#1c1c1e;letter-spacing:0.3px">0</div>
<div class="a" style="right:750px;top:118.84px;font-size:12px;line-height:16px;color:#1c1c1e;letter-spacing:0.3px">0</div>
<div class="a" style="right:683px;top:118.84px;font-size:12px;line-height:16px;color:#1c1c1e;letter-spacing:0.3px">.190</div>
<div class="a" style="right:616px;top:118.84px;font-size:12px;line-height:16px;color:#1c1c1e;letter-spacing:0.3px">1</div>
<div class="a" style="right:526px;top:118.84px;font-size:12px;line-height:16px;color:#1c1c1e;letter-spacing:0.3px">.958</div>
<div class="a" style="right:430px;top:118.84px;font-size:12px;line-height:16px;color:#1c1c1e;letter-spacing:0.3px">1.718</div>
<div class="a" style="right:363px;top:118.84px;font-size:12px;line-height:16px;color:#1c1c1e;letter-spacing:0.3px">1</div>
<div class="a" style="right:273px;top:118.84px;font-size:12px;line-height:16px;color:#1c1c1e;letter-spacing:0.3px">.042</div>
<div class="a" style="right:177px;top:118.84px;font-size:12px;line-height:16px;color:#1c1c1e;letter-spacing:0.3px">7.952</div>
<div class="a" style="left:354px;top:140.84px;font-size:12px;line-height:16px;color:#2c5066;letter-spacing:0.3px">8</div>
<div class="a" style="right:846px;top:140.84px;font-size:12px;line-height:16px;color:#1c1c1e;letter-spacing:0.3px">0</div>
<div class="a" style="right:750px;top:140.84px;font-size:12px;line-height:16px;color:#1c1c1e;letter-spacing:0.3px">1<sup>**</sup></div>
<div class="a" style="right:683px;top:140.84px;font-size:12px;line-height:16px;color:#1c1c1e;letter-spacing:0.3px">.240</div>
<div class="a" style="right:616px;top:140.84px;font-size:12px;line-height:16px;color:#1c1c1e;letter-spacing:0.3px">1</div>
<div class="a" style="right:526px;top:140.84px;font-size:12px;line-height:16px;color:#1c1c1e;letter-spacing:0.3px">1.000</div>
<div class="a" style="right:430px;top:140.84px;font-size:12px;line-height:16px;color:#1c1c1e;letter-spacing:0.3px">1.381</div>
<div class="a" style="right:363px;top:140.84px;font-size:12px;line-height:16px;color:#1c1c1e;letter-spacing:0.3px">0</div>
<div class="a" style="right:273px;top:140.84px;font-size:12px;line-height:16px;color:#1c1c1e;letter-spacing:0.3px">.000</div>
<div class="a" style="right:177px;top:140.84px;font-size:12px;line-height:16px;color:#1c1c1e;letter-spacing:0.3px">37.457</div>
<div class="a" style="left:354px;top:164.84px;font-size:12px;line-height:16px;color:#2c5066;letter-spacing:0.3px">9</div>
<div class="a" style="right:846px;top:164.84px;font-size:12px;line-height:16px;color:#1c1c1e;letter-spacing:0.3px">1</div>
<div class="a" style="right:750px;top:164.84px;font-size:12px;line-height:16px;color:#1c1c1e;letter-spacing:0.3px">1</div>
<div class="a" style="right:683px;top:164.84px;font-size:12px;line-height:16px;color:#1c1c1e;letter-spacing:0.3px">.873</div>
<div class="a" style="right:616px;top:164.84px;font-size:12px;line-height:16px;color:#1c1c1e;letter-spacing:0.3px">1</div>
<div class="a" style="right:526px;top:164.84px;font-size:12px;line-height:16px;color:#1c1c1e;letter-spacing:0.3px">.751</div>
<div class="a" style="right:430px;top:164.84px;font-size:12px;line-height:16px;color:#1c1c1e;letter-spacing:0.3px">.026</div>
<div class="a" style="right:363px;top:164.84px;font-size:12px;line-height:16px;color:#1c1c1e;letter-spacing:0.3px">0</div>
<div class="a" style="right:273px;top:164.84px;font-size:12px;line-height:16px;color:#1c1c1e;letter-spacing:0.3px">.249</div>
<div class="a" style="right:177px;top:164.84px;font-size:12px;line-height:16px;color:#1c1c1e;letter-spacing:0.3px">2.231</div>
<div class="a" style="left:354px;top:186.84px;font-size:12px;line-height:16px;color:#2c5066;letter-spacing:0.3px">10</div>
<div class="a" style="right:846px;top:186.84px;font-size:12px;line-height:16px;color:#1c1c1e;letter-spacing:0.3px">1</div>
<div class="a" style="right:750px;top:186.84px;font-size:12px;line-height:16px;color:#1c1c1e;letter-spacing:0.3px">1</div>
<div class="a" style="right:683px;top:186.84px;font-size:12px;line-height:16px;color:#1c1c1e;letter-spacing:0.3px">.810</div>
<div class="a" style="right:616px;top:186.84px;font-size:12px;line-height:16px;color:#1c1c1e;letter-spacing:0.3px">1</div>
<div class="a" style="right:526px;top:186.84px;font-size:12px;line-height:16px;color:#1c1c1e;letter-spacing:0.3px">.835</div>
<div class="a" style="right:430px;top:186.84px;font-size:12px;line-height:16px;color:#1c1c1e;letter-spacing:0.3px">.058</div>
<div class="a" style="right:363px;top:186.84px;font-size:12px;line-height:16px;color:#1c1c1e;letter-spacing:0.3px">0</div>
<div class="a" style="right:273px;top:186.84px;font-size:12px;line-height:16px;color:#1c1c1e;letter-spacing:0.3px">.165</div>
<div class="a" style="right:177px;top:186.84px;font-size:12px;line-height:16px;color:#1c1c1e;letter-spacing:0.3px">3.302</div>
<div class="a" style="left:243px;top:204.84px;font-size:12px;line-height:16px;color:#1c1c1c;letter-spacing:0.16px">For the original data, squared Mahalanobis distance is based on canonical functions.</div>
<div class="a" style="left:245.5px;top:219.84px;font-size:12px;line-height:16px;color:#1c1c1c;letter-spacing:0.16px">For the cross-validated data, squared Mahalanobis distance is based on observations.</div>
<div class="a" style="left:258px;top:240.84px;font-size:12px;line-height:16px;color:#1c1c1c;letter-spacing:0.16px">**. Misclassified case</div>
<div class="a" style="left:258.5px;top:262.84px;font-size:12px;line-height:16px;color:#1c1c1c;letter-spacing:0.145px">b. Cross validation is done only for those cases in the analysis. In cross validation, each case is classified by the functions derived from all cases other than that case.</div>
<div class="b" style="left:229px;top:308px;width:501px;height:354px;border:1px solid #000"></div>
<div class="a" style="left:391px;top:315.92px;font-size:14.67px;line-height:18px;color:#000;letter-spacing:0px;font-weight:bold">Classification Results</div>
<div class="a" style="left:542.5px;top:313.34px;font-size:12px;line-height:12px;color:#000;letter-spacing:0.4px;font-weight:bold">a,c</div>
<div class="a" style="left:486.5px;top:345.84px;font-size:12px;line-height:16px;color:#2c5066;letter-spacing:0.14px">Predicted Group Membership</div>
<div class="a" style="left:406.5px;top:368.84px;font-size:12px;line-height:16px;color:#2c5066;letter-spacing:0.3px">Kepuasan</div>
<div class="a" style="left:491px;top:365.84px;font-size:12px;line-height:16px;color:#2c5066;letter-spacing:0.2px">Tidak puas</div>
<div class="a" style="left:597px;top:365.84px;font-size:12px;line-height:16px;color:#2c5066;letter-spacing:0.3px">Puas</div>
<div class="a" style="left:676px;top:366.84px;font-size:12px;line-height:16px;color:#2c5066;letter-spacing:0.3px">Total</div>
<div class="b" style="left:568px;top:364px;width:1px;height:197px;background:#e0e0e0"></div>
<div class="b" style="left:658px;top:343px;width:1px;height:218px;background:#e0e0e0"></div>
<div class="b" style="left:234px;top:385px;width:492px;height:1px;background:#152935"></div>
<div class="b" style="left:234px;top:386px;width:244px;height:175px;background:#e0e0e0"></div>
<div class="b" style="left:568px;top:386px;width:1px;height:175px;background:#e0e0e0"></div>
<div class="b" style="left:658px;top:386px;width:1px;height:175px;background:#e0e0e0"></div>
<div class="b" style="left:398px;top:407px;width:328px;height:1px;background:#aeaeae"></div>
<div class="b" style="left:346px;top:429px;width:380px;height:1px;background:#aeaeae"></div>
<div class="b" style="left:398px;top:451px;width:328px;height:1px;background:#aeaeae"></div>
<div class="b" style="left:234px;top:473px;width:492px;height:1px;background:#aeaeae"></div>
<div class="b" style="left:398px;top:495px;width:328px;height:1px;background:#aeaeae"></div>
<div class="b" style="left:346px;top:517px;width:380px;height:1px;background:#aeaeae"></div>
<div class="b" style="left:398px;top:539px;width:328px;height:1px;background:#aeaeae"></div>
<div class="b" style="left:234px;top:561px;width:492px;height:1px;background:#152935"></div>
<div class="a" style="left:242.5px;top:389.84px;font-size:12px;line-height:16px;color:#2c5066;letter-spacing:0.3px">Original</div>
<div class="a" style="left:242.5px;top:477.84px;font-size:12px;line-height:16px;color:#2c5066;letter-spacing:0.2px">Cross-validated<sup>b</sup></div>
<div class="a" style="left:354.5px;top:389.84px;font-size:12px;line-height:16px;color:#2c5066;letter-spacing:0.3px">Count</div>
<div class="a" style="left:354.5px;top:433.84px;font-size:12px;line-height:16px;color:#2c5066;letter-spacing:0.3px">%</div>
<div class="a" style="left:354.5px;top:477.84px;font-size:12px;line-height:16px;color:#2c5066;letter-spacing:0.3px">Count</div>
<div class="a" style="left:354.5px;top:521.84px;font-size:12px;line-height:16px;color:#2c5066;letter-spacing:0.3px">%</div>
<div class="a" style="left:406.5px;top:389.84px;font-size:12px;line-height:16px;color:#2c5066;letter-spacing:0.2px">Tidak puas</div>
<div class="a" style="right:809.5px;top:389.84px;font-size:12px;line-height:16px;color:#1c1c1e;letter-spacing:0.3px">4</div>
<div class="a" style="right:719.5px;top:389.84px;font-size:12px;line-height:16px;color:#1c1c1e;letter-spacing:0.3px">1</div>
<div class="a" style="right:652px;top:389.84px;font-size:12px;line-height:16px;color:#1c1c1e;letter-spacing:0.3px">5</div>
<div class="a" style="left:406.5px;top:411.84px;font-size:12px;line-height:16px;color:#2c5066;letter-spacing:0.2px">Puas</div>
<div class="a" style="right:809.5px;top:411.84px;font-size:12px;line-height:16px;color:#1c1c1e;letter-spacing:0.3px">0</div>
<div class="a" style="right:719.5px;top:411.84px;font-size:12px;line-height:16px;color:#1c1c1e;letter-spacing:0.3px">5</div>
<div class="a" style="right:652px;top:411.84px;font-size:12px;line-height:16px;color:#1c1c1e;letter-spacing:0.3px">5</div>
<div class="a" style="left:406.5px;top:433.84px;font-size:12px;line-height:16px;color:#2c5066;letter-spacing:0.2px">Tidak puas</div>
<div class="a" style="right:809.5px;top:433.84px;font-size:12px;line-height:16px;color:#1c1c1e;letter-spacing:0.3px">80.0</div>
<div class="a" style="right:719.5px;top:433.84px;font-size:12px;line-height:16px;color:#1c1c1e;letter-spacing:0.3px">20.0</div>
<div class="a" style="right:652px;top:433.84px;font-size:12px;line-height:16px;color:#1c1c1e;letter-spacing:0.3px">100.0</div>
<div class="a" style="left:406.5px;top:455.84px;font-size:12px;line-height:16px;color:#2c5066;letter-spacing:0.2px">Puas</div>
<div class="a" style="right:809.5px;top:455.84px;font-size:12px;line-height:16px;color:#1c1c1e;letter-spacing:0.3px">.0</div>
<div class="a" style="right:719.5px;top:455.84px;font-size:12px;line-height:16px;color:#1c1c1e;letter-spacing:0.3px">100.0</div>
<div class="a" style="right:652px;top:455.84px;font-size:12px;line-height:16px;color:#1c1c1e;letter-spacing:0.3px">100.0</div>
<div class="a" style="left:406.5px;top:477.84px;font-size:12px;line-height:16px;color:#2c5066;letter-spacing:0.2px">Tidak puas</div>
<div class="a" style="right:809.5px;top:477.84px;font-size:12px;line-height:16px;color:#1c1c1e;letter-spacing:0.3px">4</div>
<div class="a" style="right:719.5px;top:477.84px;font-size:12px;line-height:16px;color:#1c1c1e;letter-spacing:0.3px">1</div>
<div class="a" style="right:652px;top:477.84px;font-size:12px;line-height:16px;color:#1c1c1e;letter-spacing:0.3px">5</div>
<div class="a" style="left:406.5px;top:499.84px;font-size:12px;line-height:16px;color:#2c5066;letter-spacing:0.2px">Puas</div>
<div class="a" style="right:809.5px;top:499.84px;font-size:12px;line-height:16px;color:#1c1c1e;letter-spacing:0.3px">0</div>
<div class="a" style="right:719.5px;top:499.84px;font-size:12px;line-height:16px;color:#1c1c1e;letter-spacing:0.3px">5</div>
<div class="a" style="right:652px;top:499.84px;font-size:12px;line-height:16px;color:#1c1c1e;letter-spacing:0.3px">5</div>
<div class="a" style="left:406.5px;top:521.84px;font-size:12px;line-height:16px;color:#2c5066;letter-spacing:0.2px">Tidak puas</div>
<div class="a" style="right:809.5px;top:521.84px;font-size:12px;line-height:16px;color:#1c1c1e;letter-spacing:0.3px">80.0</div>
<div class="a" style="right:719.5px;top:521.84px;font-size:12px;line-height:16px;color:#1c1c1e;letter-spacing:0.3px">20.0</div>
<div class="a" style="right:652px;top:521.84px;font-size:12px;line-height:16px;color:#1c1c1e;letter-spacing:0.3px">100.0</div>
<div class="a" style="left:406.5px;top:543.84px;font-size:12px;line-height:16px;color:#2c5066;letter-spacing:0.2px">Puas</div>
<div class="a" style="right:809.5px;top:543.84px;font-size:12px;line-height:16px;color:#1c1c1e;letter-spacing:0.3px">.0</div>
<div class="a" style="right:719.5px;top:543.84px;font-size:12px;line-height:16px;color:#1c1c1e;letter-spacing:0.3px">100.0</div>
<div class="a" style="right:652px;top:543.84px;font-size:12px;line-height:16px;color:#1c1c1e;letter-spacing:0.3px">100.0</div>
<div class="a" style="left:258.5px;top:565.84px;font-size:12px;line-height:16px;color:#1c1c1c;letter-spacing:0.16px">a. 90.0% of original grouped cases correctly classified.</div>
<div class="a" style="left:258.5px;top:587.84px;font-size:12px;line-height:16px;color:#1c1c1c;letter-spacing:0.16px">b. Cross validation is done only for those cases in the analysis. In cross</div>
<div class="a" style="left:271px;top:602.84px;font-size:12px;line-height:16px;color:#1c1c1c;letter-spacing:0.16px">validation, each case is classified by the functions derived from all cases other</div>
<div class="a" style="left:271px;top:617.84px;font-size:12px;line-height:16px;color:#1c1c1c;letter-spacing:0.16px">than that case.</div>
<div class="a" style="left:258.5px;top:639.84px;font-size:12px;line-height:16px;color:#1c1c1c;letter-spacing:0.16px">c. 90.0% of cross-validated grouped cases correctly classified.</div>
<svg class="b" style="left:213px;top:478px" width="15" height="14" viewBox="0 0 15 14"><path d="M0 4.5h7V0l8 7l-8 7V9.5H0z" fill="#f00"/></svg>
<div class="a" style="left:1073.5px;top:650.24px;font-size:19.5px;line-height:24px;color:#c6c6c6;letter-spacing:0.25px">Activate Windows</div>
<div class="a" style="left:1073.5px;top:675.98px;font-size:14.5px;line-height:18px;color:#c6c6c6;letter-spacing:0.22px">Go to Settings to activate Windows.</div>
</div></div>
<div class="b" style="left:1348px;top:92px;width:15px;height:611px;background:linear-gradient(90deg,rgba(255,255,255,0.7),rgba(255,255,255,0) 50%,rgba(200,196,210,0.25)),linear-gradient(#fcfcfd,#e8e7ee 50%,#d6d4e0);border-left:1px solid #1e8fff;border-right:1px solid #0a4a8a"></div>
<div class="b" style="left:1348px;top:92px;width:15px;height:15px;background:#a8d0fa;border:1px solid #1e8fff;border-right-color:#0a4a8a"></div>
<svg class="b" style="left:1351px;top:97px" width="9" height="5" viewBox="0 0 9 5"><path d="M0 5L4.5 0L9 5z" fill="url(#gtri)"/></svg>
<div class="b" style="left:1348px;top:664px;width:15px;height:24px;background:linear-gradient(90deg,#9cc2ea,#6fa2d8 50%,#3c7cc4);border-left:1px solid #1e8fff;border-right:1px solid #0a4a8a;border-top:1px solid #1e8fff"></div>
<div class="b" style="left:1348px;top:688px;width:15px;height:15px;background:#a8d0fa;border:1px solid #1e8fff;border-right-color:#0a4a8a;border-bottom-color:#0a4a8a"></div>
<svg class="b" style="left:1351px;top:693px" width="9" height="5" viewBox="0 0 9 5"><path d="M0 0L4.5 5L9 0z" fill="url(#gtri)"/></svg>
<div class="b" style="left:0px;top:706px;width:1366px;height:22px;background:#fff"></div>
<div class="b" style="left:0px;top:726px;width:1366px;height:1px;background:#e4e6ea"></div>
<div class="b" style="left:0px;top:727px;width:1366px;height:1px;background:#a8acb4"></div>
<div class="b" style="left:5px;top:708px;width:904px;height:17px;background:#e3eef9;border-top:1px solid #9a9a9a;border-left:1px solid #9a9a9a"></div>
<div class="b" style="left:910px;top:708px;width:224px;height:17px;background:#e3eef9;border-top:1px solid #9a9a9a;border-left:1px solid #9a9a9a"></div>
<div class="b" style="left:1135px;top:708px;width:16px;height:17px;background:#e3eef9;border-top:1px solid #9a9a9a;border-left:1px solid #9a9a9a"></div>
<div class="b" style="left:1152px;top:708px;width:25px;height:17px;background:#e3eef9;border-top:1px solid #9a9a9a;border-left:1px solid #9a9a9a"></div>
<div class="b" style="left:1178px;top:708px;width:76px;height:17px;background:#e3eef9;border-top:1px solid #9a9a9a;border-left:1px solid #9a9a9a"></div>
<div class="b" style="left:1255px;top:708px;width:109px;height:17px;background:#e3eef9;border-top:1px solid #9a9a9a;border-left:1px solid #9a9a9a"></div>
<div class="a" style="left:913px;top:709.84px;font-size:12px;line-height:16px;letter-spacing:0.14px">IBM SPSS Statistics Processor is ready</div>
<div class="a" style="left:1181px;top:709.84px;font-size:12px;line-height:16px;letter-spacing:0.0px">Unicode:ON</div>
<div class="a" style="left:1259.5px;top:709.84px;font-size:12px;line-height:16px;letter-spacing:-0.05px">H: 354, W: 501 pt.</div>
<div class="b" style="left:0px;top:728px;width:1366px;height:40px;background:linear-gradient(90deg,#253842 0%,#243742 45%,#233542 52%,#21313f 71%,#1f2d40 81%,#1e2a42 100%)"></div>
<div class="b" style="left:1361px;top:728px;width:1px;height:40px;background:#7e8494"></div>
<svg class="b" style="left:16px;top:741px" width="17" height="16" viewBox="0 0 17 16">
<path d="M0 2.2L7 1.2V7.5H0zM8 1L17 0V7.5H8zM0 8.5H7V14.8L0 13.8zM8 8.5H17V16L8 15z" fill="#fff"/></svg>
<div class="b" style="left:48px;top:728px;width:344px;height:40px;background:#f0f0f0;border-left:1px solid #fafafa;border-right:1px solid #fafafa;border-bottom:1px solid #c8c8c8"></div>
<svg class="b" style="left:56px;top:738px" width="22" height="22" viewBox="0 0 22 22">
<circle cx="14.2" cy="7.2" r="4.8" fill="none" stroke="#111" stroke-width="1.3"/><path d="M10.7 10.7L4.3 17.3" stroke="#111" stroke-width="1.4"/></svg>
<div class="a" style="left:88px;top:738.98px;font-size:14.5px;line-height:20px;color:#222;letter-spacing:0.05px">Type here to search</div>
<svg class="b" style="left:407px;top:739px" width="18" height="18" viewBox="0 0 18 18"><circle cx="9" cy="9" r="7" fill="none" stroke="#fff" stroke-width="2"/></svg>
<svg class="b" style="left:455px;top:740px" width="17" height="16" viewBox="0 0 17 16" fill="none" stroke="#fff" stroke-width="1.2">
<path d="M1 1.5h11M1 14.5h11"/><rect x="2.5" y="4" width="8" height="8"/><path d="M14.5 1v1.8M14.5 5v10"/></svg>
<div class="b" style="left:495px;top:766px;width:35px;height:2px;background:#76b9ed"></div>
<div class="b" style="left:539px;top:766px;width:35px;height:2px;background:#76b9ed"></div>
<div class="b" style="left:627px;top:766px;width:26px;height:2px;background:#76b9ed"></div>
<div class="b" style="left:654px;top:766px;width:8px;height:2px;background:#5a88b0"></div>
<div class="b" style="left:758px;top:766px;width:34px;height:2px;background:#76b9ed"></div>
<div class="b" style="left:801px;top:766px;width:34px;height:2px;background:#76b9ed"></div>
<div class="b" style="left:844px;top:766px;width:34px;height:2px;background:#76b9ed"></div>
<div class="b" style="left:887px;top:766px;width:34px;height:2px;background:#76b9ed"></div>
<div class="b" style="left:930px;top:766px;width:34px;height:2px;background:#76b9ed"></div>
<div class="b" style="left:973px;top:766px;width:34px;height:2px;background:#76b9ed"></div>
<div class="b" style="left:1012px;top:728px;width:38px;height:40px;background:#48535e"></div>
<div class="b" style="left:1050px;top:728px;width:1px;height:40px;background:#2a3440"></div>
<div class="b" style="left:1051px;top:728px;width:3px;height:40px;background:#3a4652"></div>
<div class="b" style="left:1012px;top:766px;width:38px;height:2px;background:#8cc8f8"></div>
<svg class="b" style="left:0;top:728px" width="1366" height="40" viewBox="0 728 1366 40">
<defs>
<radialGradient id="tspss" cx="0.35" cy="0.3" r="0.8"><stop offset="0" stop-color="#90c4f0"/><stop offset="1" stop-color="#2a64a8"/></radialGradient>
<linearGradient id="tedgeb" x1="0" y1="0" x2="0.6" y2="1"><stop offset="0" stop-color="#28a8f0"/><stop offset="1" stop-color="#0a58c0"/></linearGradient>
<linearGradient id="tedge2" x1="0" y1="0" x2="1" y2="0.6"><stop offset="0" stop-color="#30b8f0"/><stop offset="0.5" stop-color="#30d0c0"/><stop offset="1" stop-color="#60e050"/></linearGradient>
</defs>
<!-- edge -->
<circle cx="512" cy="748" r="12" fill="url(#tedgeb)"/>
<path d="M500.2 747.5A12 12 0 0 1 524 748Q524 753.5 518.5 754Q513 754 511 751.5Q516.5 751.5 516.5 747Q515.5 741.5 509.5 742Q503.5 742.5 500.2 747.5Z" fill="url(#tedge2)"/>
<path d="M506.5 750Q506 744.5 510.5 744.5Q515 744.5 515 748.5Q515 751.5 511.5 751.5Q508 751.5 506.5 750Z" fill="#243642"/>
<path d="M507 751Q509 757 516 757Q520.5 757 523 754Q519 759.5 512 760Q504.5 759.5 502 753Q501 749 503 746Q504 750 507 751Z" fill="#0c4ea0" opacity="0.85"/>
<!-- explorer -->
<rect x="545" y="740" width="22" height="17" fill="#ffd35a"/>
<path d="M545 739h9l1.5 2H545z" fill="#e8a000"/>
<rect x="545" y="741" width="22" height="2" fill="#ffc840"/>
<path d="M549.5 757v-7q0-1 1-1h12q1 0 1 1v7h-3.5v-4h-7v4z" fill="#3a90e0"/>
<!-- mail -->
<path d="M588 744l12-7l12 7v15h-24z" fill="#1a70c8"/>
<path d="M589 745h22v13h-22z" fill="#3aa0f0"/>
<path d="M589 745l11 8l11-8" fill="#e8f4ff"/>
<rect x="594" y="747.5" width="28" height="16" rx="8" fill="#2a2a2a" stroke="#888" stroke-width="0.8"/>
<text x="608" y="760" font-family="Liberation Sans" font-size="12" font-weight="bold" fill="#fff" text-anchor="middle">99+</text>
<!-- word -->
<rect x="632.5" y="736.5" width="21" height="20" fill="#fff" stroke="#2a5aa8"/>
<rect x="633" y="737" width="20" height="3" fill="#c8d8f0"/>
<text x="643" y="751" font-family="Liberation Sans" font-size="14" font-weight="bold" fill="#1a50b0" text-anchor="middle">W</text>
<path d="M643 752l11-3l1 6l-11 2z" fill="#e8f0fa" stroke="#a0b0c8" stroke-width="0.6"/>
<!-- store -->
<path d="M682 740v-2.5q0-1.5 1.5-1.5h8q1.5 0 1.5 1.5v2.5" fill="none" stroke="#30b0f0" stroke-width="1.8"/>
<rect x="676" y="740" width="23" height="20" rx="2.5" fill="#f4f4f4"/>
<rect x="683" y="745" width="4" height="4" fill="#f25022"/><rect x="688" y="745" width="4" height="4" fill="#7fba00"/>
<rect x="683" y="750" width="4" height="4" fill="#00a4ef"/><rect x="688" y="750" width="4" height="4" fill="#ffb900"/>
<!-- matlab -->
<path d="M720 750l8-6l4-7l7 12l5 7l-5-4l-5 7l-4-5z" fill="#e07020"/>
<path d="M720 750l8-6l3 5l-4 4z" fill="#4a90d0"/>
<path d="M732 737l7 12l-3 9l-5-8z" fill="#c04010"/>
<!-- chrome -->
<path d="M775 748L764.6 742A12 12 0 0 1 785.4 742Z" fill="#e0402e"/>
<path d="M775 748L785.4 742A12 12 0 0 1 775 760Z" fill="#fbc02d"/>
<path d="M775 748L775 760A12 12 0 0 1 764.6 742Z" fill="#2e9e48"/>
<circle cx="775" cy="748" r="5.5" fill="#fff"/><circle cx="775" cy="748" r="4.5" fill="#3a80f0"/>
<circle cx="781" cy="754.5" r="8" fill="#0c4a8a"/>
<text x="781" y="758.5" font-family="Liberation Sans" font-size="11" fill="#fff" text-anchor="middle">C</text>
<!-- teams -->
<circle cx="823" cy="740.5" r="3.5" fill="#7b83eb"/>
<circle cx="829" cy="742" r="2.5" fill="#5059c9"/>
<rect x="815" y="745" width="16" height="13" rx="3" fill="#7b83eb"/>
<rect x="805.5" y="741.5" width="13" height="13" rx="1.5" fill="#4b53bc"/>
<text x="812" y="752" font-family="Liberation Sans" font-size="11" font-weight="bold" fill="#fff" text-anchor="middle">T</text>
<circle cx="826" cy="755" r="5" fill="#92c353" stroke="#1f2d37" stroke-width="1"/>
<path d="M823.5 755l2 2l3-3.5" fill="none" stroke="#fff" stroke-width="1.2"/>
<!-- whatsapp -->
<circle cx="860.5" cy="746.5" r="11" fill="#fff"/>
<circle cx="860.5" cy="746.5" r="9.5" fill="#2ab540"/>
<path d="M851 757l2-5l4 3z" fill="#fff"/>
<path d="M856 742q1-2 2-1l1 2.5q-1 1 0 2q2 3 4 4q1 1 2 0l2.5 1q1 1-1 2.5q-4 1-8-3q-4-4-2.5-8z" fill="#fff"/>
<circle cx="867" cy="754" r="8" fill="#f00000"/>
<text x="867" y="758.5" font-family="Liberation Sans" font-size="12" fill="#fff" text-anchor="middle">13</text>
<!-- powerpoint -->
<rect x="892" y="736" width="22" height="22" fill="#fff" stroke="#c8401a"/>
<rect x="892.5" y="736.5" width="21" height="2.5" fill="#e8704a"/>
<text x="900.5" y="752" font-family="Liberation Sans" font-size="15" font-weight="bold" fill="#d2461e" text-anchor="middle">P</text>
<path d="M900 752.5l13.5-3l1.5 7l-13 2.5z" fill="#fff" stroke="#d06040" stroke-width="0.7"/>
<ellipse cx="907.5" cy="751" rx="4" ry="2.6" fill="#e04a22"/>
<!-- excel -->
<rect x="935.5" y="736.5" width="22" height="21" fill="#fff" stroke="#1e7a30"/>
<rect x="936" y="737" width="21" height="2.5" fill="#6cc070"/>
<text x="944" y="752.5" font-family="Liberation Sans" font-size="15" font-weight="bold" fill="#1d7a2c" text-anchor="middle">X</text>
<path d="M944 752.5l13.5-3l1.5 7l-13 2.5z" fill="#fff" stroke="#4a9a50" stroke-width="0.7"/>
<path d="M947 754h9M947 756h8" stroke="#8ac08a" stroke-width="0.6"/>
<!-- R -->
<circle cx="990" cy="748" r="12" fill="#6fa2dc"/>
<text x="990" y="754.5" font-family="Liberation Serif" font-size="17" fill="#fff" text-anchor="middle">R</text>
<!-- spss -->
<circle cx="1032" cy="747.5" r="12" fill="url(#tspss)"/>
<text x="1027.5" y="753" font-family="Liberation Serif" font-size="15" fill="#eef6ff" text-anchor="middle">&#931;</text>
<text x="1037" y="748" font-family="Liberation Sans" font-size="8.5" fill="#eef6ff" text-anchor="middle">&#945;</text>
<path d="M1035 754.5h4.5M1037.2 752.3v4.5" stroke="#dfefff" stroke-width="1"/>
<!-- weather umbrella -->
<path d="M1071 750q0-9 9.5-9q9.5 0 9.5 9z" fill="#62b8f4"/>
<path d="M1080.5 741q-3 3-3.5 9M1080.5 741q3 3 3.5 9" stroke="#9ad4ff" stroke-width="0.8" fill="none"/>
<path d="M1080.5 750v6.5q0 2.5-2 2.5q-1.8 0-1.8-2" fill="none" stroke="#b8a898" stroke-width="1.3"/>
<path d="M1082.5 739l1-1.8M1086 737.5l1-1.8M1087 741l1-1.8M1090.5 740l1-1.8M1089.5 744l1-1.8" stroke="#5ab4f0" stroke-width="1.3"/>
<!-- tray: chevron, wifi, volume, net -->
<path d="M1160 751.5l5.5-6l5.5 6" fill="none" stroke="#fff" stroke-width="1.3"/>
<path d="M1185 753.5a11 11 0 0 1 11-11M1188 753.5a8 8 0 0 1 8-8M1191 753.5a5 5 0 0 1 5-5" fill="none" stroke="#fff" stroke-width="1.1"/>
<circle cx="1195" cy="752.5" r="1.3" fill="#fff"/>
<path d="M1205.5 746h3l4-4v12l-4-4h-3z" fill="none" stroke="#fff" stroke-width="1.1"/>
<path d="M1215 745.5q2 2.5 0 5M1217.5 743.5q3.5 4.5 0 9M1220 741.5q5 6.5 0 13" fill="none" stroke="#fff" stroke-width="1.1"/>
<path d="M1232 743l2.5-1.5l2.5 1.5l-2.5 1.5zM1240 743l2.5-1.5l2.5 1.5l-2.5 1.5zM1232 748l2.5-1.5l2.5 1.5l-2.5 1.5z" fill="#fff"/>
<circle cx="1241" cy="752" r="4" fill="#e81123"/>
<path d="M1239.3 750.3l3.4 3.4M1242.7 750.3l-3.4 3.4" stroke="#fff" stroke-width="1"/>
<!-- notifications -->
<path d="M1324.5 740h17v12.8h-8l-4.5 3.5v-3.5h-4.5z" fill="#fff"/>
<path d="M1328 743.5h10M1328 746.5h10M1328 749.5h8" stroke="#1e2a42" stroke-width="1.1"/>
<circle cx="1340.5" cy="755.5" r="9.5" fill="#2c2c2c" stroke="#8a8a8a" stroke-width="0.9"/>
<text x="1340.5" y="760" font-family="Liberation Sans" font-size="12.5" font-weight="bold" fill="#fff" text-anchor="middle">34</text>
</svg>
<div class="a" style="left:1103px;top:740.32px;font-size:13.5px;line-height:18px;color:#ececec;letter-spacing:-0.2px">Huja...</div>
<div class="a" style="left:1259.5px;top:731.34px;font-size:12px;line-height:16px;color:#f4f4f4;letter-spacing:-0.3px">2:36 PM</div>
<div class="a" style="left:1253px;top:749.34px;font-size:12px;line-height:16px;color:#f4f4f4;letter-spacing:-0.2px">11/30/2022</div>
</body></html>
